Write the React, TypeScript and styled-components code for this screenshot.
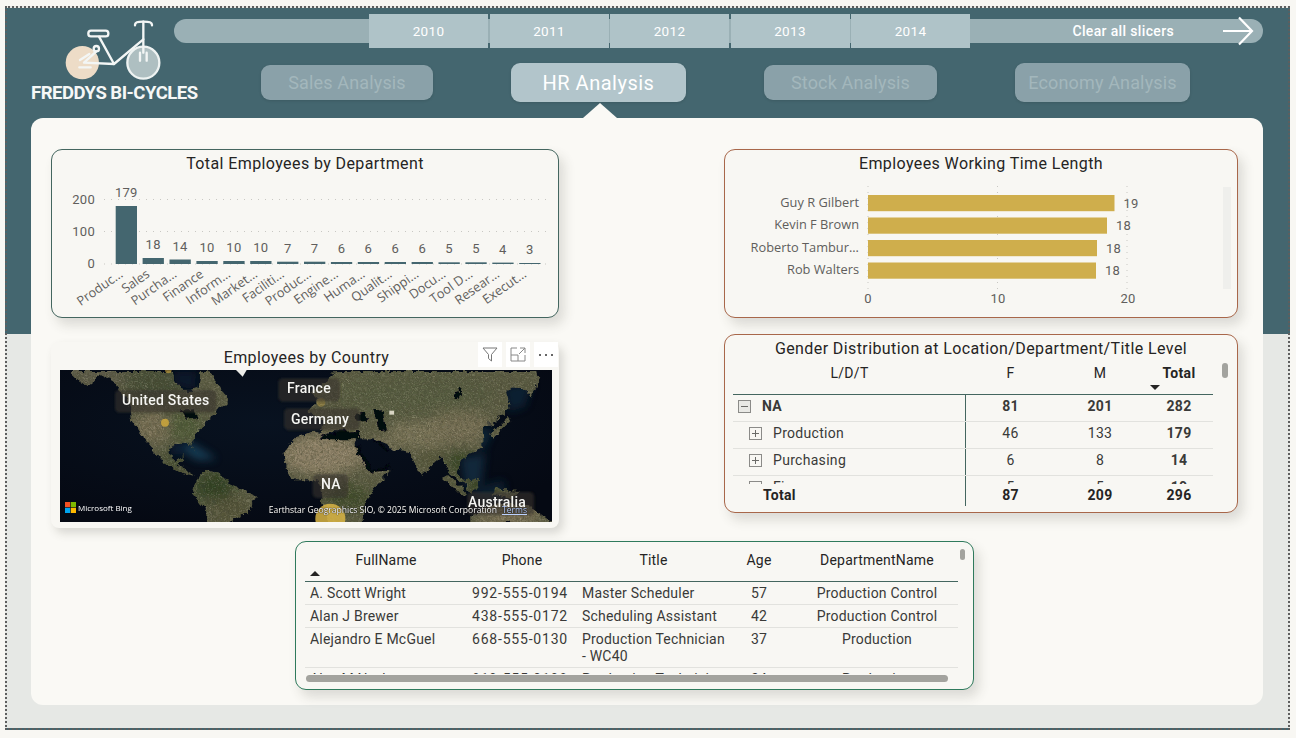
import React from "react";
import styled, { createGlobalStyle } from "styled-components";

const din = `"Roboto", "Liberation Sans", sans-serif`;
const segoe = `"Open Sans", "Liberation Sans", sans-serif`;

const GlobalStyle = createGlobalStyle`
  html, body { margin: 0; padding: 0; background: #f8f7f3; }
  body { font-family: ${din}; overflow: hidden; }
`;

const departments = [
  { name: "Produc...", value: 179, h: 58 },
  { name: "Sales", value: 18, h: 6 },
  { name: "Purcha...", value: 14, h: 4.5 },
  { name: "Finance", value: 10, h: 3 },
  { name: "Inform...", value: 10, h: 3 },
  { name: "Market...", value: 10, h: 3 },
  { name: "Faciliti...", value: 7, h: 2.3 },
  { name: "Produc...", value: 7, h: 2.3 },
  { name: "Engine...", value: 6, h: 2 },
  { name: "Huma...", value: 6, h: 2 },
  { name: "Qualit...", value: 6, h: 2 },
  { name: "Shippi...", value: 6, h: 2 },
  { name: "Docu...", value: 5, h: 1.7 },
  { name: "Tool D...", value: 5, h: 1.7 },
  { name: "Resear...", value: 4, h: 1.4 },
  { name: "Execut...", value: 3, h: 1 },
];

const tenure = [
  { name: "Guy R Gilbert", value: 19, end: 1114.5, y: 195 },
  { name: "Kevin F Brown", value: 18, end: 1107, y: 217.5 },
  { name: "Roberto Tambur...", value: 18, end: 1097, y: 240 },
  { name: "Rob Walters", value: 18, end: 1096, y: 262.5 },
];

const years = ["2010", "2011", "2012", "2013", "2014"];

const tabs = [
  { label: "Sales Analysis", w: 172, tall: false, active: false },
  { label: "HR Analysis", w: 175, tall: true, active: true },
  { label: "Stock Analysis", w: 173, tall: false, active: false },
  { label: "Economy Analysis", w: 175, tall: true, active: false },
];

const matrixRows = [
  { label: "NA", f: "81", m: "201", total: "282", top: true },
  { label: "Production", f: "46", m: "133", total: "179", top: false },
  { label: "Purchasing", f: "6", m: "8", total: "14", top: false },
  { label: "Finance", f: "5", m: "5", total: "10", top: false },
];

const people = [
  { name: "A. Scott Wright", phone: "992-555-0194", title: "Master Scheduler", age: 57, dept: "Production Control" },
  { name: "Alan J Brewer", phone: "438-555-0172", title: "Scheduling Assistant", age: 42, dept: "Production Control" },
  { name: "Alejandro E McGuel", phone: "668-555-0130", title: "Production Technician - WC40", age: 37, dept: "Production" },
  { name: "Alex M Nayberg", phone: "819-555-0198", title: "Production Technician", age: 34, dept: "Production" },
];

const mapLabels = [
  { text: "United States", x: 122, y: 392 },
  { text: "France", x: 287, y: 380 },
  { text: "Germany", x: 291, y: 411 },
  { text: "NA", x: 321, y: 476 },
  { text: "Australia", x: 468, y: 494 },
];

const Frame = styled.div`
  box-sizing: border-box;
  width: 1285px;
  height: 724px;
  margin: 6px 0 0 5px;
  border: 2px dotted #5e5e5e;
  background: linear-gradient(to bottom, #44666f 0, #44666f 326px, #e6e8e5 326px, #e6e8e5 100%);
`;

const Header = styled.header`
  display: flex;
  height: 110px;
  padding-left: 24px;
`;

const Logo = styled.div`
  flex: 0 0 143px;
  min-width: 0;
  padding-top: 7px;
`;

const LogoName = styled.div`
  margin-top: 2px;
  color: #f6f8f7;
  font: 700 18.5px ${din};
  letter-spacing: -0.5px;
  white-space: nowrap;
`;

const HeaderRight = styled.div`
  flex: 1;
  margin-right: 25px;
  padding-top: 6px;
`;

const SlicerTrack = styled.div`
  display: flex;
  align-items: center;
  height: 24px;
  margin-top: 5px;
  border-radius: 12px;
  background: #9ab0b5;
`;

const SlicerSpacer = styled.div`
  flex: 0 0 195px;
`;

const YearTiles = styled.div`
  display: flex;
  gap: 1.5px;
`;

const YearTile = styled.div`
  display: flex;
  align-items: center;
  justify-content: center;
  width: 119px;
  height: 34px;
  background: #afc3c8;
  color: #fff;
  font-size: 13.5px;
  letter-spacing: 0.3px;
`;

const ClearSlicers = styled.div`
  flex: 1;
  display: flex;
  align-items: center;
  justify-content: flex-end;
  gap: 48px;
  padding-right: 9px;
  color: #fff;
  font-size: 14px;
  font-weight: 500;
  letter-spacing: 0.35px;
`;

const Tabs = styled.nav`
  display: flex;
  align-items: center;
  gap: 78px;
  height: 39px;
  margin: 20px 0 0 87px;
`;

const Tab = styled.div<{ $w: number; $tall: boolean; $active: boolean }>`
  position: relative;
  display: flex;
  align-items: center;
  justify-content: center;
  width: ${(p) => p.$w}px;
  height: ${(p) => (p.$tall ? 39 : 35)}px;
  border-radius: 9px;
  background: ${(p) => (p.$active ? "#b2c5cb" : "#8aa1a9")};
  color: ${(p) => (p.$active ? "#fff" : "#a3b7bc")};
  font-size: ${(p) => (p.$active ? 20 : 18)}px;
  letter-spacing: ${(p) => (p.$active ? 0.5 : 0.15)}px;
  box-shadow: 0 1px 3px rgba(0, 0, 0, 0.12);
`;

const TabNotch = styled.span`
  position: absolute;
  left: 72px;
  top: 40px;
  width: 0;
  height: 0;
  border-left: 17px solid transparent;
  border-right: 17px solid transparent;
  border-bottom: 15px solid #faf9f5;
`;

const Panel = styled.main`
  box-sizing: border-box;
  height: 587px;
  margin: 0 25px 0 24px;
  padding: 31px 25px 0 20px;
  border-radius: 12px;
  background: #faf9f5;
`;

const TopRow = styled.div`
  display: flex;
  justify-content: space-between;
  height: 379px;
`;

const Column = styled.div<{ $gap: number; $w: number }>`
  display: flex;
  flex-direction: column;
  gap: ${(p) => p.$gap}px;
  width: ${(p) => p.$w}px;
`;

const Card = styled.section<{ $h: number; $border: string }>`
  position: relative;
  box-sizing: border-box;
  height: ${(p) => p.$h}px;
  border: 1px solid ${(p) => p.$border};
  border-radius: 11px;
  background: #f8f7f3;
  box-shadow: 5px 7px 12px rgba(60, 60, 50, 0.16);
`;

const CardTitle = styled.h2`
  margin: 0;
  height: 25px;
  color: #252423;
  font: 400 16px/28px ${din};
  letter-spacing: 0.4px;
  text-align: center;
  white-space: nowrap;
`;

const ChartSvg = styled.svg`
  display: block;
`;

const AxisText = styled.text`
  fill: #605e5c;
  font-family: ${din};
  font-size: 13px;
  letter-spacing: 0.3px;
`;

const NameText = styled.text`
  fill: #605e5c;
  font-family: ${segoe};
  font-size: 12.8px;
`;

const ScrollTrack = styled.div`
  position: absolute;
  left: 498px;
  top: 37px;
  width: 8px;
  height: 102px;
  background: #efefec;
`;

const MapCard = styled(Card)`
  border: none;
  box-shadow: 4px 5px 10px rgba(60, 60, 50, 0.18);
  border-radius: 8px;
  padding: 2px 6px 0 9px;
`;

const MapTitle = styled(CardTitle)`
  height: 26px;
`;

const MapBox = styled.div`
  position: relative;
  width: 492px;
  height: 152px;
  overflow: hidden;
  background: #060a14;
`;

const MapLabel = styled.span<{ $x: number; $y: number }>`
  position: absolute;
  left: ${(p) => p.$x - 60}px;
  top: ${(p) => p.$y - 370}px;
  color: #f5f5f2;
  font-size: 14px;
  font-weight: 500;
  letter-spacing: 0.25px;
  line-height: 17px;
  white-space: nowrap;
`;

const BingMark = styled.div`
  position: absolute;
  left: 5px;
  bottom: 9px;
  display: flex;
  align-items: center;
  gap: 2px;
  color: #fff;
  font: 8px ${segoe};
`;

const Copyright = styled.div`
  position: absolute;
  right: 25px;
  bottom: 6px;
  display: flex;
  gap: 5px;
  color: #fff;
  font: 8.55px ${segoe};
  text-shadow: 0 0 1px #000, 0 0 1px #000;
  white-space: nowrap;
`;

const TermsLink = styled.span`
  color: #bcd2ff;
  text-decoration: underline;
`;

const HoverIcons = styled.div`
  position: absolute;
  top: 0;
  right: 1px;
  display: flex;
  gap: 4px;
`;

const HoverIcon = styled.div`
  display: flex;
  align-items: center;
  justify-content: center;
  width: 24px;
  height: 25px;
  background: #fff;
  color: #6b6b6b;
`;

const MatrixBody = styled.div`
  width: 480px;
  margin-left: 8px;
`;

const MatrixHead = styled.div`
  display: grid;
  grid-template-columns: 233px 89px 90px 68px;
  height: 34px;
  border-bottom: 1px solid #44665f;
  color: #252423;
  font-size: 14px;
  letter-spacing: 0.3px;
`;

const HeadCell = styled.div<{ $bold?: boolean }>`
  position: relative;
  padding-top: 3px;
  line-height: 20px;
  text-align: center;
  font-weight: ${(p) => (p.$bold ? 700 : 400)};
`;

const SortArrow = styled.span<{ $up?: boolean; $left: number; $top: number }>`
  position: absolute;
  left: ${(p) => p.$left}px;
  top: ${(p) => p.$top}px;
  width: 0;
  height: 0;
  border-left: 5px solid transparent;
  border-right: 5px solid transparent;
  ${(p) => (p.$up ? "border-bottom: 5px solid #252423;" : "border-top: 5px solid #252423;")}
`;

const MatrixScroll = styled.div`
  height: 89px;
  overflow: hidden;
`;

const MatrixRow = styled.div`
  display: grid;
  grid-template-columns: 233px 89px 90px 68px;
  height: 26px;
  border-bottom: 1px solid #e2e2de;
  color: #3a3a38;
  font-size: 14px;
  letter-spacing: 0.3px;
  line-height: 22px;
`;

const MatrixTotal = styled(MatrixRow)`
  height: 22px;
  border-bottom: none;
  color: #252423;
`;

const RowLabel = styled.div<{ $indent: number; $bold?: boolean }>`
  display: flex;
  align-items: flex-start;
  gap: 11px;
  padding-left: ${(p) => p.$indent}px;
  border-right: 1px solid #44665f;
  font-weight: ${(p) => (p.$bold ? 700 : 400)};
`;

const NumCell = styled.div<{ $bold?: boolean }>`
  text-align: center;
  font-weight: ${(p) => (p.$bold ? 700 : 400)};
`;

const ExpandBox = styled.svg`
  display: block;
  flex: none;
  margin-top: 5px;
`;

const VThumb = styled.div<{ $left: number; $top: number; $w: number; $h: number }>`
  position: absolute;
  left: ${(p) => p.$left}px;
  top: ${(p) => p.$top}px;
  width: ${(p) => p.$w}px;
  height: ${(p) => p.$h}px;
  border-radius: 3px;
  background: #a3a39e;
`;

const TableCard = styled(Card)`
  width: 679px;
  margin: 13px 0 0 244px;
  padding-left: 9px;
  overflow: hidden;
`;

const PeopleGrid = styled.div`
  display: grid;
  grid-template-columns: 162px 110px 153px 58px 170px;
  width: 653px;
`;

const PeopleHead = styled(PeopleGrid)`
  height: 37px;
  padding-top: 2px;
  border-bottom: 1px solid #44665f;
  color: #252423;
  font-size: 14px;
  letter-spacing: 0.2px;
`;

const PeopleHeadCell = styled.div<{ $pad?: number }>`
  position: relative;
  padding: 8px 0 0 ${(p) => p.$pad ?? 0}px;
  text-align: center;
`;

const PeopleScroll = styled.div`
  height: 92px;
  overflow: hidden;
`;

const PeopleRow = styled(PeopleGrid)`
  border-bottom: 1px solid #e2e2de;
  color: #3a3a38;
  font-size: 14px;
  letter-spacing: 0.2px;
  line-height: 17px;
`;

const PeopleCell = styled.div<{ $center?: boolean; $pad?: number }>`
  padding: 3px 5px 2px ${(p) => p.$pad ?? 5}px;
  text-align: ${(p) => (p.$center ? "center" : "left")};
`;

const PhoneCell = styled(PeopleCell)`
  padding-right: 0;
  letter-spacing: 0.8px;
  white-space: nowrap;
`;

const HScroll = styled.div`
  position: absolute;
  left: 10px;
  top: 133px;
  width: 642px;
  height: 7px;
  border-radius: 4px;
  background: #a3a39e;
`;

const BikeLogo = () => (
  <svg width="105" height="65" viewBox="120 15 315 195" style={{ display: "block", marginLeft: 29 }}>
    <circle cx="187" cy="158" r="50" fill="#eddcc7" />
    <circle cx="370" cy="158" r="48" fill="#aebfc1" stroke="#eef3f2" strokeWidth="7" />
    <g fill="none" stroke="#f3f6f5" strokeWidth="7" strokeLinecap="round" strokeLinejoin="round">
      <rect x="205" y="62" width="60" height="17" rx="8" />
      <path d="M237 80 L282 162 L370 88" />
      <path d="M345 46 C345 36 352 35 370 35 C388 35 396 36 396 46" />
      <path d="M370 35 L370 128" />
      <circle cx="229" cy="116" r="8" />
      <path d="M229 124 L192 158 L282 162" />
      <path d="M180 150 L208 132 M178 172 L212 172" />
      <path d="M360 128 L360 152 M380 128 L380 152" />
    </g>
  </svg>
);

const ArrowRight = () => (
  <svg width="32" height="30" viewBox="0 0 32 30" style={{ display: "block", marginTop: -1 }}>
    <path d="M1 15 H30 M17 1.5 L30 15 L17 28.5" fill="none" stroke="#fff" strokeWidth="2.2" />
  </svg>
);

const DepartmentChart = () => (
  <ChartSvg width="506" height="142" viewBox="52 175 506 142">
    {[199.5, 231.5, 264].map((y) => (
      <line key={y} x1="104" x2="550" y1={y} y2={y} stroke="#c9c8c3" strokeWidth="1" strokeDasharray="1 6" />
    ))}
    {[
      { t: "200", y: 203.5 },
      { t: "100", y: 235.5 },
      { t: "0", y: 267.5 },
    ].map((a) => (
      <AxisText key={a.t} x="95" y={a.y} textAnchor="end">
        {a.t}
      </AxisText>
    ))}
    {departments.map((d, i) => {
      const x = 115.7 + i * 26.9;
      return (
        <g key={i}>
          <rect x={x} y={264 - d.h} width="21.3" height={d.h} fill="#44666f" />
          <AxisText x={x + 10.6} y={264 - d.h - 9} textAnchor="middle">
            {d.value}
          </AxisText>
          <NameText x={x + 8} y="276" textAnchor="end" transform={`rotate(-35 ${x + 8} 276)`}>
            {d.name}
          </NameText>
        </g>
      );
    })}
  </ChartSvg>
);

const TenureChart = () => (
  <ChartSvg width="512" height="142" viewBox="725 175 512 142">
    {[868, 997.5, 1127].map((x) => (
      <line key={x} x1={x} x2={x} y1="186" y2="289" stroke="#c9c8c3" strokeWidth="1" strokeDasharray="1 5" />
    ))}
    {tenure.map((t) => (
      <g key={t.name}>
        <rect x="868" y={t.y} width={t.end - 868} height="16.2" fill="#cfae4c" />
        <NameText x="859" y={t.y + 11.5} textAnchor="end">
          {t.name}
        </NameText>
        <AxisText x={t.end + 9} y={t.y + 12.5}>
          {t.value}
        </AxisText>
      </g>
    ))}
    {[
      { t: "0", x: 868 },
      { t: "10", x: 998 },
      { t: "20", x: 1128 },
    ].map((a) => (
      <AxisText key={a.t} x={a.x} y="303" textAnchor="middle">
        {a.t}
      </AxisText>
    ))}
  </ChartSvg>
);

// land outlines traced from the satellite map, in a 1476x456 space (3x the map box)
const landPaths = [
  "M30 0 L335 0 L340 30 L375 62 L410 50 L415 0 L440 0 L465 35 L495 75 L498 100 L470 118 L432 150 L398 200 L388 218 L402 243 L382 212 L350 212 L326 226 L322 250 L345 268 L368 250 L362 272 L345 280 L402 312 L362 302 L302 266 L250 206 L215 152 L205 100 L160 35 L120 10 L78 42 L32 12 Z",
  "M396 345 L430 296 L480 310 L512 342 L590 376 L562 420 L500 456 L438 456 L430 410 L392 366 Z",
  "M668 245 L700 195 L760 182 L880 205 L886 228 L925 300 L986 296 L950 340 L915 380 L900 456 L800 456 L786 400 L770 325 L700 325 L676 300 Z",
  "M818 0 L1418 0 L1438 15 L1405 80 L1395 55 L1330 52 L1346 110 L1320 135 L1290 160 L1268 162 L1270 215 L1238 242 L1200 260 L1185 300 L1215 345 L1165 310 L1140 255 L1080 312 L1040 240 L990 235 L975 215 L940 205 L886 205 L890 182 L810 180 L780 192 L790 142 L735 128 L770 85 L745 62 L795 30 Z",
  "M1285 190 L1338 140 L1345 150 L1295 200 Z",
  "M1158 312 L1220 370 L1205 372 L1150 322 Z",
  "M1208 330 L1250 318 L1252 360 L1220 362 Z",
  "M1300 350 L1380 362 L1350 384 L1295 370 Z",
  "M1225 432 L1300 400 L1400 400 L1476 456 L1225 456 Z",
];

const landPatches = [
  { cx: 110, cy: 15, rx: 100, ry: 40, fill: "#5c5a46" },
  { cx: 280, cy: 30, rx: 90, ry: 55, fill: "#444e36" },
  { cx: 270, cy: 165, rx: 55, ry: 48, fill: "#787055" },
  { cx: 370, cy: 165, rx: 50, ry: 45, fill: "#4f5c37" },
  { cx: 340, cy: 270, rx: 50, ry: 35, fill: "#454d33" },
  { cx: 460, cy: 350, rx: 62, ry: 46, fill: "#2f4120" },
  { cx: 505, cy: 415, rx: 60, ry: 40, fill: "#525339" },
  { cx: 780, cy: 250, rx: 120, ry: 62, fill: "#8f8268" },
  { cx: 860, cy: 380, rx: 70, ry: 40, fill: "#3f4b2a" },
  { cx: 945, cy: 250, rx: 45, ry: 40, fill: "#8a7e64" },
  { cx: 1050, cy: 70, rx: 240, ry: 70, fill: "#565c3f" },
  { cx: 1080, cy: 190, rx: 110, ry: 40, fill: "#7a7459" },
  { cx: 1195, cy: 170, rx: 90, ry: 50, fill: "#777055" },
  { cx: 1110, cy: 265, rx: 50, ry: 35, fill: "#54573a" },
  { cx: 1200, cy: 275, rx: 45, ry: 40, fill: "#374625" },
  { cx: 1265, cy: 345, rx: 55, ry: 30, fill: "#304120" },
  { cx: 1340, cy: 430, rx: 100, ry: 35, fill: "#7d7257" },
];

const waterPatches = [
  { d: "M388 215 L445 250 L470 268 L410 270 L375 245 Z", fill: "#1f4c66" },
  { d: "M330 225 L385 215 L372 252 L335 252 Z", fill: "#0d2740" },
  { d: "M338 5 L408 5 L405 60 L350 45 Z", fill: "#0b1c30" },
  { d: "M1330 52 L1420 30 L1395 110 L1345 125 Z", fill: "#0f273a" },
  { d: "M1250 170 L1300 180 L1270 240 L1240 230 Z", fill: "#112d40" },
  { d: "M1200 262 L1275 250 L1265 340 L1215 350 Z", fill: "#143246" },
  { d: "M1220 360 L1330 330 L1340 390 L1260 390 Z", fill: "#0f2638" },
];

const darkSeas = [
  "M780 190 L890 180 L892 205 L810 205 L782 200 Z",
  "M885 125 L915 122 L918 150 L890 152 Z",
  "M940 120 L965 118 L975 175 L952 178 Z",
  "M882 222 L892 222 L930 296 L920 296 Z",
  "M925 298 L990 282 L992 288 L932 304 Z",
  "M942 212 L952 210 L982 236 L972 238 Z",
  "M360 118 L395 112 L412 140 L382 146 Z",
  "M1195 50 L1205 55 L1190 82 L1180 80 Z",
];

const labelPlates = [
  { x: 165, y: 60, w: 305, h: 68 },
  { x: 655, y: 25, w: 185, h: 70 },
  { x: 672, y: 115, w: 228, h: 65 },
  { x: 758, y: 312, w: 106, h: 72 },
  { x: 1222, y: 366, w: 200, h: 70 },
];

const WorldMap = () => (
  <svg width="492" height="152" viewBox="0 0 1476 456" style={{ display: "block" }}>
    <defs>
      <clipPath id="landClip">
        {landPaths.map((d) => (
          <path key={d} d={d} />
        ))}
      </clipPath>
      <filter id="darkGrain" x="0" y="0" width="100%" height="100%">
        <feTurbulence type="fractalNoise" baseFrequency="0.16" numOctaves="3" seed="11" />
        <feColorMatrix values="0 0 0 0 0.06  0 0 0 0 0.06  0 0 0 0 0.03  1.8 0 0 0 -0.6" />
      </filter>
      <filter id="lightGrain" x="0" y="0" width="100%" height="100%">
        <feTurbulence type="fractalNoise" baseFrequency="0.22" numOctaves="2" seed="23" />
        <feColorMatrix values="0 0 0 0 0.78  0 0 0 0 0.72  0 0 0 0 0.56  0 2 0 0 -0.95" />
      </filter>
      <filter id="coast" x="-5%" y="-5%" width="110%" height="110%">
        <feTurbulence type="turbulence" baseFrequency="0.03" numOctaves="3" seed="4" result="wobble" />
        <feDisplacementMap in="SourceGraphic" in2="wobble" scale="20" xChannelSelector="R" yChannelSelector="G" />
        <feGaussianBlur stdDeviation="1.6" />
      </filter>
      <filter id="patchBlur" x="-40%" y="-40%" width="180%" height="180%">
        <feGaussianBlur stdDeviation="18" />
      </filter>
      <filter id="waterBlur" x="-30%" y="-30%" width="160%" height="160%">
        <feGaussianBlur stdDeviation="12" />
      </filter>
      <filter id="plateBlur" x="-10%" y="-10%" width="120%" height="120%">
        <feGaussianBlur stdDeviation="3" />
      </filter>
      <radialGradient id="oceanGlow" cx="0.42" cy="0.35" r="0.7">
        <stop offset="0" stopColor="#081220" />
        <stop offset="1" stopColor="#050913" />
      </radialGradient>
    </defs>
    <rect width="1476" height="456" fill="url(#oceanGlow)" />
    <g filter="url(#waterBlur)" opacity="0.75">
      {waterPatches.map((w) => (
        <path key={w.d} d={w.d} fill={w.fill} />
      ))}
    </g>
    <g filter="url(#coast)">
      <g clipPath="url(#landClip)">
        <rect width="1476" height="456" fill="#5b5c43" />
        <g filter="url(#patchBlur)">
          {landPatches.map((p) => (
            <ellipse key={`${p.cx}-${p.cy}`} cx={p.cx} cy={p.cy} rx={p.rx} ry={p.ry} fill={p.fill} />
          ))}
        </g>
        <rect width="1476" height="456" filter="url(#darkGrain)" opacity="0.6" />
        <rect width="1476" height="456" filter="url(#lightGrain)" opacity="0.3" />
      </g>
    </g>
    <g filter="url(#coast)" fill="#04070f">
      {darkSeas.map((d) => (
        <path key={d} d={d} />
      ))}
    </g>
    <path d="M528 0 L560 0 L548 20 Z" fill="#ecece8" />
    <rect x="988" y="122" width="14" height="12" fill="#d9d5c4" />
    <circle cx="315" cy="158" r="12" fill="#cfa83c" opacity="0.85" />
    <circle cx="325" cy="0" r="10" fill="#c9a43c" opacity="0.6" />
    <circle cx="783" cy="97" r="13" fill="#c9a43c" opacity="0.35" />
    <circle cx="811" cy="446" r="45" fill="#d9b544" opacity="0.85" />
    <g filter="url(#plateBlur)">
      {labelPlates.map((p) => (
        <rect key={p.x} x={p.x} y={p.y} width={p.w} height={p.h} rx="14" fill="#37342b" opacity="0.6" />
      ))}
    </g>
  </svg>
);

const ExpandIcon = ({ open }: { open?: boolean }) => (
  <ExpandBox width="13" height="13" viewBox="0 0 13 13">
    <rect x="0.5" y="0.5" width="12" height="12" fill={open ? "#e9e9e5" : "none"} stroke="#8b8b88" />
    <path d={open ? "M3 6.5H10" : "M3 6.5H10M6.5 3V10"} stroke="#6b6b68" />
  </ExpandBox>
);

const App: React.FC = () => {
  return (
    <>
      <GlobalStyle />
      <Frame>
        <Header>
          <Logo>
            <BikeLogo />
            <LogoName>FREDDYS BI-CYCLES</LogoName>
          </Logo>
          <HeaderRight>
            <SlicerTrack>
              <SlicerSpacer />
              <YearTiles>
                {years.map((y) => (
                  <YearTile key={y}>{y}</YearTile>
                ))}
              </YearTiles>
              <ClearSlicers>
                Clear all slicers
                <ArrowRight />
              </ClearSlicers>
            </SlicerTrack>
            <Tabs>
              {tabs.map((t) => (
                <Tab key={t.label} $w={t.w} $tall={t.tall} $active={t.active}>
                  {t.label}
                  {t.active && <TabNotch />}
                </Tab>
              ))}
            </Tabs>
          </HeaderRight>
        </Header>
        <Panel>
          <TopRow>
            <Column $gap={24} $w={508}>
              <Card $h={169} $border="#44665f">
                <CardTitle>Total Employees by Department</CardTitle>
                <DepartmentChart />
              </Card>
              <MapCard $h={186} $border="transparent">
                <MapTitle>Employees by Country</MapTitle>
                <HoverIcons>
                  <HoverIcon>
                    <svg width="16" height="15" viewBox="0 0 16 15">
                      <path d="M1 1H15L9.5 7.5V14L6.5 11.5V7.5Z" fill="none" stroke="#777" />
                    </svg>
                  </HoverIcon>
                  <HoverIcon>
                    <svg width="16" height="15" viewBox="0 0 16 15">
                      <path d="M15 8V14H1V1H7M1 8H8V14M10 1H15V6M15 1L9 7" fill="none" stroke="#888" />
                    </svg>
                  </HoverIcon>
                  <HoverIcon>
                    <svg width="16" height="4" viewBox="0 0 16 4">
                      <path d="M1 1H3V3H1ZM7 1H9V3H7ZM13 1H15V3H13Z" fill="#666" />
                    </svg>
                  </HoverIcon>
                </HoverIcons>
                <MapBox>
                  <WorldMap />
                  {mapLabels.map((l) => (
                    <MapLabel key={l.text} $x={l.x} $y={l.y}>
                      {l.text}
                    </MapLabel>
                  ))}
                  <BingMark>
                    <svg width="11" height="11" viewBox="0 0 11 11">
                      <rect width="5.2" height="5.2" fill="#f25022" />
                      <rect x="5.8" width="5.2" height="5.2" fill="#7fba00" />
                      <rect y="5.8" width="5.2" height="5.2" fill="#00a4ef" />
                      <rect x="5.8" y="5.8" width="5.2" height="5.2" fill="#ffb900" />
                    </svg>
                    Microsoft Bing
                  </BingMark>
                  <Copyright>
                    Earthstar Geographics SIO, © 2025 Microsoft Corporation
                    <TermsLink>Terms</TermsLink>
                  </Copyright>
                </MapBox>
              </MapCard>
            </Column>
            <Column $gap={16} $w={514}>
              <Card $h={169} $border="#a8674a">
                <CardTitle>Employees Working Time Length</CardTitle>
                <TenureChart />
                <ScrollTrack />
              </Card>
              <Card $h={179} $border="#a8674a">
                <CardTitle>Gender Distribution at Location/Department/Title Level</CardTitle>
                <MatrixBody>
                  <MatrixHead>
                    <HeadCell>L/D/T</HeadCell>
                    <HeadCell>F</HeadCell>
                    <HeadCell>M</HeadCell>
                    <HeadCell $bold>
                      Total
                      <SortArrow $left={5} $top={25} />
                    </HeadCell>
                  </MatrixHead>
                  <MatrixScroll>
                    {matrixRows.map((r) => (
                      <MatrixRow key={r.label}>
                        <RowLabel $indent={r.top ? 5 : 16} $bold={r.top}>
                          <ExpandIcon open={r.top} />
                          {r.label}
                        </RowLabel>
                        <NumCell $bold={r.top}>{r.f}</NumCell>
                        <NumCell $bold={r.top}>{r.m}</NumCell>
                        <NumCell $bold>{r.total}</NumCell>
                      </MatrixRow>
                    ))}
                  </MatrixScroll>
                  <MatrixTotal>
                    <RowLabel $indent={30} $bold>
                      Total
                    </RowLabel>
                    <NumCell $bold>87</NumCell>
                    <NumCell $bold>209</NumCell>
                    <NumCell $bold>296</NumCell>
                  </MatrixTotal>
                </MatrixBody>
                <VThumb $left={497} $top={28} $w={6} $h={15} />
              </Card>
            </Column>
          </TopRow>
          <TableCard $h={149} $border="#2f7a5c">
            <PeopleHead>
              <PeopleHeadCell>
                FullName
                <SortArrow $up $left={5} $top={27} />
              </PeopleHeadCell>
              <PeopleHeadCell>Phone</PeopleHeadCell>
              <PeopleHeadCell>Title</PeopleHeadCell>
              <PeopleHeadCell>Age</PeopleHeadCell>
              <PeopleHeadCell $pad={8}>DepartmentName</PeopleHeadCell>
            </PeopleHead>
            <PeopleScroll>
              {people.map((p) => (
                <PeopleRow key={p.name}>
                  <PeopleCell>{p.name}</PeopleCell>
                  <PhoneCell>{p.phone}</PhoneCell>
                  <PeopleCell>{p.title}</PeopleCell>
                  <PeopleCell $center>{p.age}</PeopleCell>
                  <PeopleCell $center $pad={13}>
                    {p.dept}
                  </PeopleCell>
                </PeopleRow>
              ))}
            </PeopleScroll>
            <HScroll />
            <VThumb $left={664} $top={7} $w={5} $h={11} />
          </TableCard>
        </Panel>
      </Frame>
    </>
  );
};

export default App;
